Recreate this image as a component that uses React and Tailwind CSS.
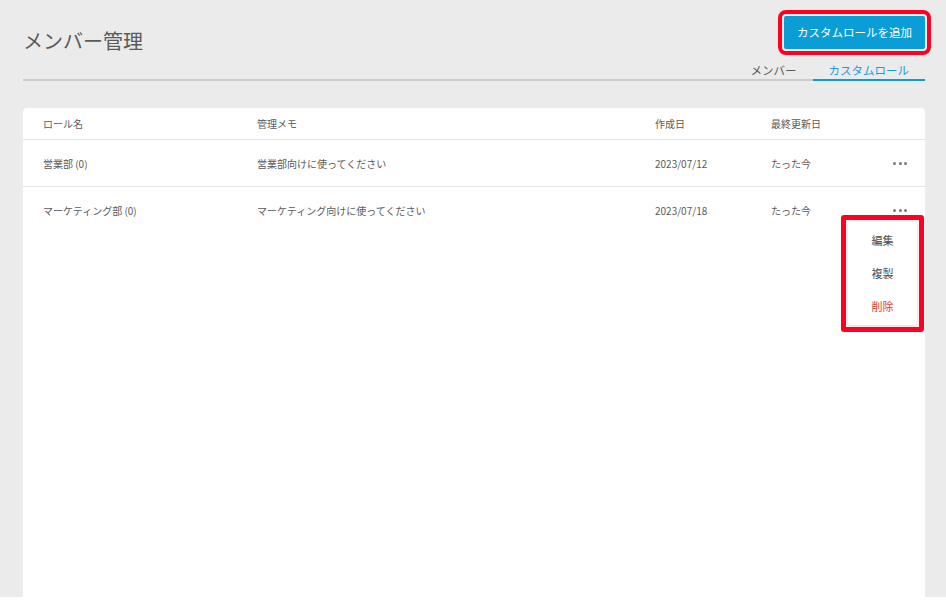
import React from 'react';

const rows = [
  { name: '営業部 (0)', memo: '営業部向けに使ってください', created: '2023/07/12', updated: 'たった今' },
  { name: 'マーケティング部 (0)', memo: 'マーケティング向けに使ってください', created: '2023/07/18', updated: 'たった今' },
];

const Dots = () => (
  <div className="flex items-center gap-[2.5px]">
    <span className="w-[3px] h-[3px] rounded-full bg-[#777]"></span>
    <span className="w-[3px] h-[3px] rounded-full bg-[#777]"></span>
    <span className="w-[3px] h-[3px] rounded-full bg-[#777]"></span>
  </div>
);

export default function App() {
  return (
    <div className="w-[946px] h-[609px] bg-white font-['Noto_Sans_CJK_JP','Noto_Sans',sans-serif] text-[#5a5a5a]">
      <div className="h-[597px] bg-[#ebebeb] pl-[23px] pr-[21px] flex flex-col">
        {/* ヘッダー */}
        <div className="flex justify-between items-start pt-[16px] border-b-2 border-[#cccccc]">
          <h1 className="mt-[12px] text-[20px] leading-[26px] text-[#5a5a5a]">メンバー管理</h1>
          <div className="flex flex-col items-end">
            <button className="h-[33px] px-[13px] rounded-[2px] bg-[#0b9dd6] text-white text-[11.5px] outline-4 outline-offset-2 outline-[#ff0022]">
              カスタムロールを追加
            </button>
            <div className="flex mt-[12px] -mb-[2px]">
              <div className="px-[16px] h-[20px] leading-[18px] text-[11.5px] text-[#5a5a5a] border-b-2 border-transparent">メンバー</div>
              <div className="px-[16px] h-[20px] leading-[18px] text-[11.5px] text-[#1a9dd9] border-b-2 border-[#0b9dd6]">カスタムロール</div>
            </div>
          </div>
        </div>

        {/* テーブル */}
        <div className="mt-[27px] flex-1 bg-white rounded-t-[4px]">
          <div className="flex items-center h-[32px] px-[20px] border-b border-[#e6e6e6] text-[10px]">
            <div className="w-[214px]">ロール名</div>
            <div className="w-[398px]">管理メモ</div>
            <div className="w-[116px]">作成日</div>
            <div className="flex-1">最終更新日</div>
          </div>
          {rows.map((r, i) => (
            <div
              key={i}
              className={`relative flex items-center h-[47px] pl-[20px] pr-[18px] text-[10px] ${i === 0 ? 'border-b border-[#e6e6e6]' : ''}`}
            >
              <div className="w-[214px]">{r.name}</div>
              <div className="w-[398px]">{r.memo}</div>
              <div className="w-[116px]">{r.created}</div>
              <div className="flex-1">{r.updated}</div>
              <Dots />
              {i === 1 && (
                <div className="absolute top-[28px] right-[1px] z-10 border-[5px] border-[#ff0022] rounded-[3px] p-[2px] bg-[#f6f6f6]">
                  <div className="w-[69px] py-[2px] bg-white rounded-[3px] shadow-[0_1px_3px_rgba(0,0,0,0.1)] flex flex-col text-[11px]">
                    <div className="h-[33px] flex items-center justify-center text-[#4a4a4a]">編集</div>
                    <div className="h-[33px] flex items-center justify-center text-[#4a4a4a]">複製</div>
                    <div className="h-[33px] flex items-center justify-center text-[#e53935]">削除</div>
                  </div>
                </div>
              )}
            </div>
          ))}
        </div>
      </div>
    </div>
  );
}
